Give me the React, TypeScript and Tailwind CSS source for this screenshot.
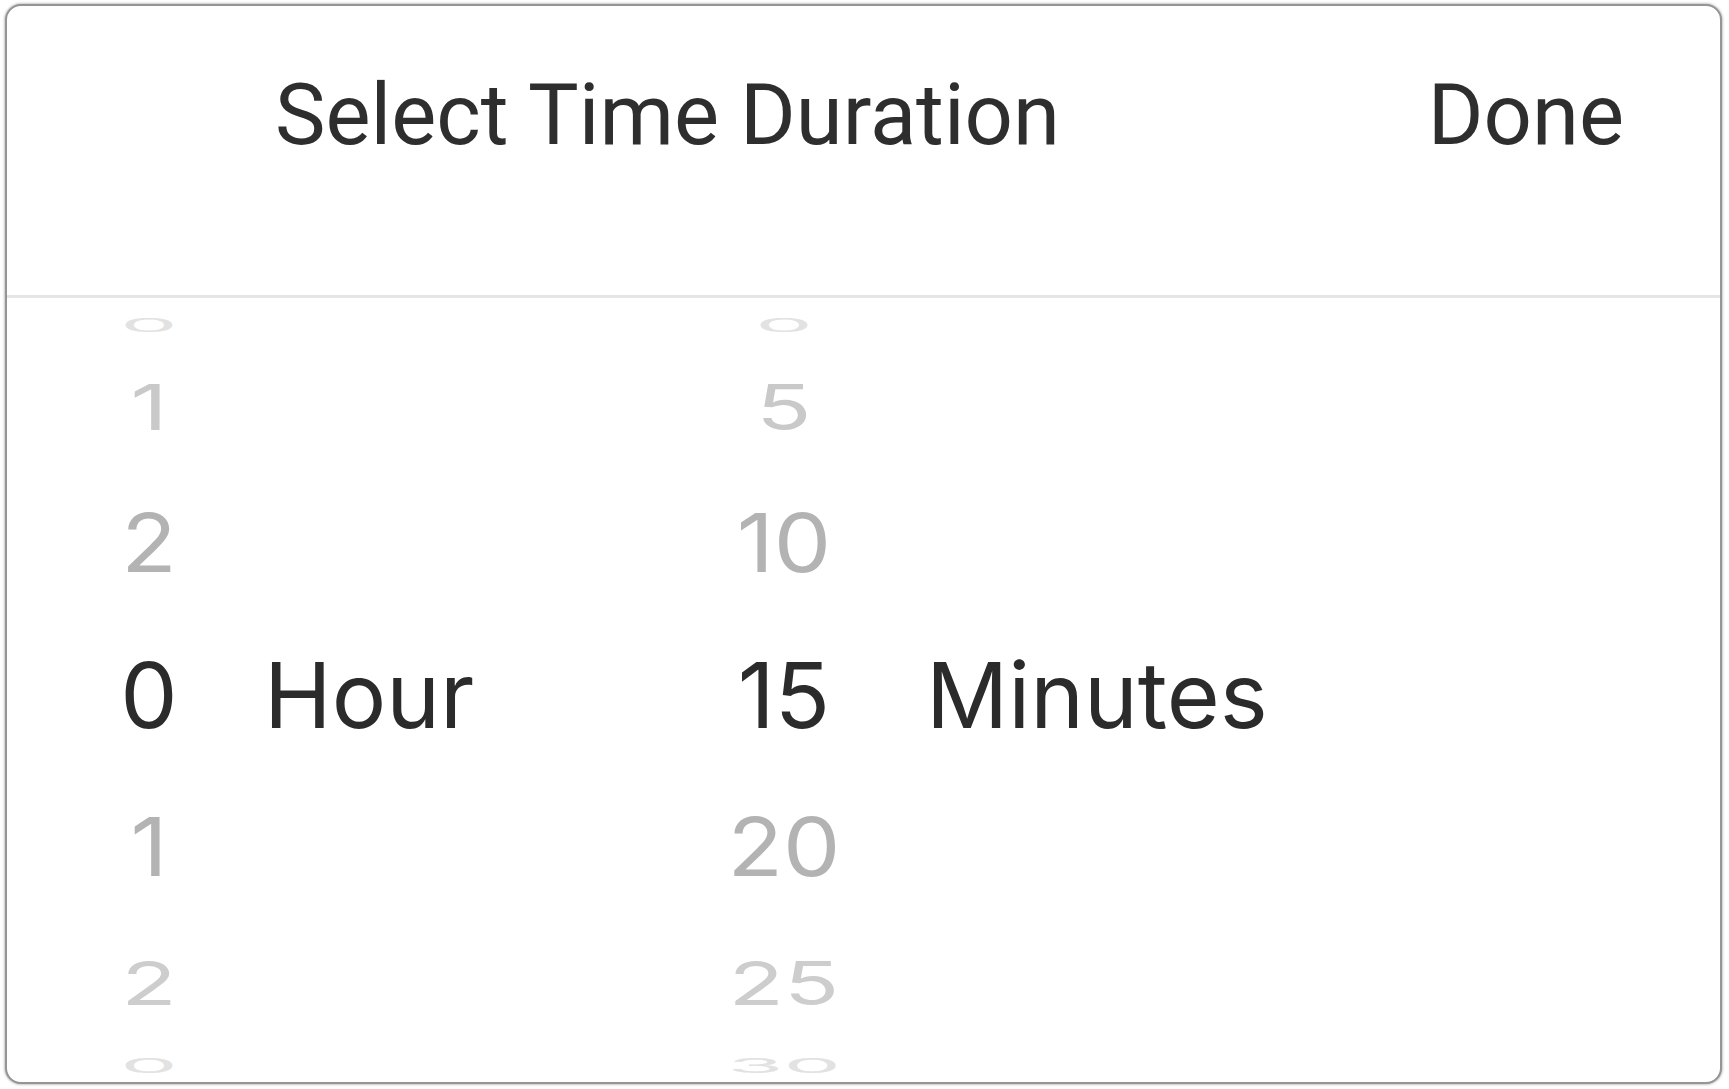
import React from "react";

const hours = ["0", "1", "2", "0", "1", "2", "0"];
const minutes = ["0", "5", "10", "15", "20", "25", "30"];

// row heights and wheel look, top to bottom; the middle one is the selected row
const rows = [
	{ h: "h-[54px]", tone: "text-[#e2e2e2] scale-y-[0.2]" },
	{ h: "h-[110px]", tone: "text-[#c9c9c9] scale-y-[0.7]" },
	{ h: "h-[162px]", tone: "text-[#b3b3b3] scale-y-[0.89]" },
	{ h: "h-[142px]", tone: "text-[#2b2b2b]" },
	{ h: "h-[162px]", tone: "text-[#b3b3b3] scale-y-[0.89]" },
	{ h: "h-[110px]", tone: "text-[#cdcdcd] scale-y-[0.67]" },
	{ h: "h-[54px]", tone: "text-[#e2e2e2] scale-y-[0.22]" },
];

function Wheel({ items }: { items: string[] }) {
	return (
		<div className="flex flex-col">
			{items.map((item, i) => (
				<div key={i} className={`${rows[i].h} flex items-center justify-center`}>
					<span className={`block leading-none ${rows[i].tone}`}>{item}</span>
				</div>
			))}
		</div>
	);
}

function Label({ text, pad }: { text: string; pad: string }) {
	return (
		<div className="flex flex-col">
			<div className="h-[326px]" />
			<div className={`h-[142px] flex items-center ${pad} text-[#2b2b2b]`}>
				<span className="leading-none">{text}</span>
			</div>
		</div>
	);
}

export default function App() {
	return (
		<div className="min-h-screen bg-white pt-[4px] pl-[5px] font-['Roboto',sans-serif]">
			<div className="w-[1717px] h-[1080px] overflow-hidden rounded-[16px] border-2 border-[#959595] bg-white shadow-[0_0_3px_rgba(0,0,0,0.45)]">
				{/* Header */}
				<div className="h-[292px] flex items-start justify-between pt-[67px] pl-[268px] pr-[96px] border-b-[3px] border-[#e5e5e5]">
					<h1 className="text-[85px] leading-none font-normal text-[#2e2e2e]">
						Select Time Duration
					</h1>
					<button className="text-[85px] leading-none text-[#2e2e2e]">Done</button>
				</div>

				{/* Picker */}
				<div className="grid grid-cols-[120px_495px_160px_1fr] pl-[82px] text-[91px] font-['Inter',sans-serif]">
					<Wheel items={hours} />
					<Label text="Hour" pad="pl-[55px]" />
					<Wheel items={minutes} />
					<Label text="Minutes" pad="pl-[62px]" />
				</div>
			</div>
		</div>
	);
}
